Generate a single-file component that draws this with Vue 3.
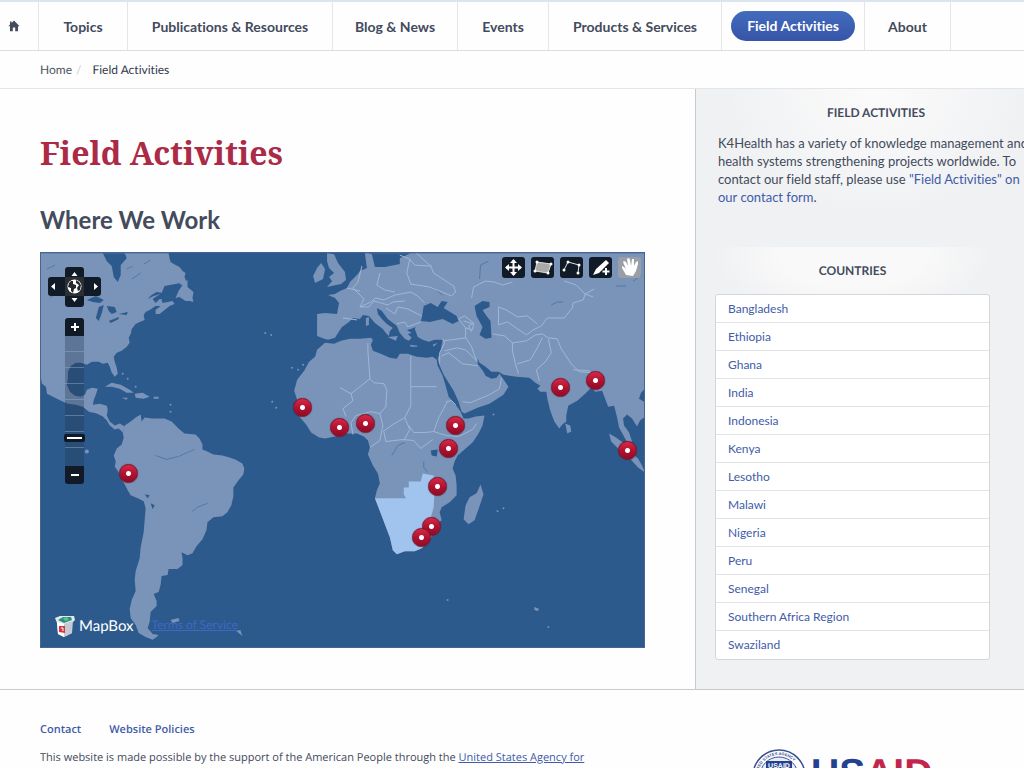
<script setup>
const links = ['Topics', 'Publications & Resources', 'Blog & News', 'Events', 'Products & Services', 'Field Activities', 'About']
const countries = ['Bangladesh', 'Ethiopia', 'Ghana', 'India', 'Indonesia', 'Kenya', 'Lesotho', 'Malawi', 'Nigeria', 'Peru', 'Senegal', 'Southern Africa Region', 'Swaziland']

const markers = [
  { name: 'Senegal', x: 262, y: 155 },
  { name: 'Ghana', x: 299, y: 175 },
  { name: 'Nigeria', x: 325, y: 171 },
  { name: 'Ethiopia', x: 415, y: 173 },
  { name: 'Kenya', x: 408, y: 196 },
  { name: 'Malawi', x: 397, y: 235 },
  { name: 'Swaziland', x: 391, y: 275 },
  { name: 'Lesotho', x: 381, y: 286 },
  { name: 'India', x: 521, y: 135 },
  { name: 'Bangladesh', x: 556, y: 128 },
  { name: 'Indonesia', x: 588, y: 199 },
  { name: 'Peru', x: 87, y: 222 }
]
const place = (m) => ({ left: (m.x / 605) * 100 + '%', top: (m.y / 395) * 100 + '%' })
</script>

<template>
  <div class="page">
    <nav class="nav" aria-label="Main">
      <a href="#" class="home" aria-label="Home">
        <svg width="12" height="12" viewBox="0 0 12 12"><path d="M6 .6 11.6 6.2H10V11.2H7.2V7.6H4.8V11.2H2V6.2H.4L2 4.6V1.5H3.6V3Z" fill="#434b5c" /></svg>
      </a>
      <a v-for="l in links" :key="l" href="#" :class="{ active: l === 'Field Activities' }"><span>{{ l }}</span></a>
    </nav>

    <div class="crumbs">
      <a href="#">Home</a><span class="slash">/</span><span class="here">Field Activities</span>
    </div>

    <div class="body">
      <main>
        <h1>Field Activities</h1>
        <h2>Where We Work</h2>
        <div class="map">
          <svg class="world" viewBox="40 252 605 395" aria-hidden="true">
            <rect x="40" y="252" width="605" height="395" fill="#2d5a8d" />
            <g fill="#7993b9">
              <path d="M40 252H168L169 257 170 261 175 264 179 266 182 270 185 272 184 276 186 281 182 284 178 283 174 287 170 289 166 290 162 292 156 291 151 294 147 298 153 295 159 293 163 293 165 295 161 299 162 302 167 301 172 300 174 303 169 305 164 309 159 313 155 313 155 309 160 305 155 305 149 309 145 311 143 314 144 319 139 321 135 323 131 328 130 333 128 337 129 342 126 346 121 350 116 352 113 356 114 361 116 367 117 373 114 376 111 372 109 366 107 362 102 363 98 361 91 361 86 364 80 362 75 362 70 365 67 371 67 377 66 384 69 391 74 395 80 396 84 394 86 389 91 387 97 388 95 394 93 399 92 404 99 403 106 405 107 409 106 415 109 421 114 425 119 423 124 426 122 432 118 428 114 429 109 425 106 420 102 416 96 413 88 411 82 406 75 404 67 403 60 400 52 396 46 393 45 386 41 383 40 378Z" />
              <path d="M178 290 184 281 187 279 187 286 193 291 192 297 193 301 189 300 185 300 179 296 175 297Z" />
              <path d="M122 432 124 425 130 421 135 417 140 414 141 421 144 417 151 418 164 418 171 421 175 425 179 429 184 433 195 434 199 438 202 444 202 449 207 451 213 454 222 455 229 457 235 459 242 463 244 468 243 474 238 480 233 487 233 496 231 505 227 512 222 516 213 517 207 522 206 530 202 539 196 546 192 553 187 555 181 552 182 558 182 565 177 569 168 569 167 575 161 576 160 585 158 592 153 594 156 601 156 606 150 612 149 622 147 628 152 634 158 635 156 637 152 640 145 637 138 633 135 625 130 618 129 609 131 600 135 591 134 580 135 571 139 558 140 547 143 532 144 520 145 508 143 501 137 498 130 495 127 490 122 480 118 472 114 466 115 461 113 455 116 448 121 444 123 437Z" />
              <path d="M325 342 334 343 341 340 350 338 360 338 371 337 373 339 371 344 373 350 381 353 390 357 397 358 400 353 408 353 417 356 427 357 433 356 437 359 438 365 443 375 446 385 449 396 456 404 461 411 464 418 469 418 476 416 485 415 483 425 479 433 473 442 466 448 458 455 455 461 453 468 456 475 457 485 457 495 450 502 442 507 440 512 442 520 435 525 433 533 429 542 422 548 415 551 405 551 397 554 393 550 390 537 385 524 380 510 375 498 377 490 380 483 378 473 373 465 368 454 370 447 368 440 364 436 357 433 347 433 335 436 325 438 319 437 311 432 306 424 300 417 296 408 297 399 294 390 297 379 304 370 309 361 315 356 317 349Z" />
              <path d="M365 252H645V417L641 420 638 426 633 418 628 414 624 418 625 425 630 432 633 441 629 443 626 438 620 427 618 417 615 405 609 406 606 398 603 390 596 391 592 387 586 393 578 400 569 405 567 415 567 421 563 424 560 428 555 421 551 410 548 398 547 391 541 391 538 388 541 385 536 382 530 377 517 376 504 374 499 371 492 371 486 366 480 362 478 358 478 363 484 371 486 375 492 378 497 377 500 373 505 380 509 386 504 394 490 403 478 407 465 413 462 411 459 401 454 390 449 382 444 374 440 365 438 358 441 350 443 339 435 339 429 341 423 339 418 336 415 328 416 326 411 328 407 329 412 332 408 333 412 337 409 340 405 338 400 332 397 325 388 318 382 310 377 307 378 313 382 318 387 323 393 327 390 330 389 335 386 332 383 328 375 322 369 315 363 314 360 318 353 317 349 321 342 326 338 332 335 337 328 339 324 338 317 335 317 329 317 313 325 312 337 313 339 302 335 297 328 294 335 293 340 290 347 287 350 281 357 274 360 270 367 267 366 260Z" />
              <path d="M327 252 334 253 338 262 345 271 346 279 341 283 327 286 332 280 329 276 334 272 329 267 327 260Z" />
              <path d="M321 262 325 268 323 278 315 282 313 275 317 267Z" />
              <path d="M481 484 484 494 479 509 475 520 469 524 464 519 466 505 470 497 477 493Z" />
              <path d="M610 433 617 437 625 443 633 453 639 458 643 465 646 472 639 467 630 457 621 450 612 441Z" />
              <path d="M566 423 571 425 572 431 568 433Z" />
              <path d="M104 386 111 382 120 384 129 389 133 392 126 392 119 388 111 386ZM134 393 142 392 149 396 143 398 135 397ZM121 397 127 397 126 399ZM153 396 158 396 158 398 153 398Z" />
              <path d="M388 336 398 335 396 340ZM366 317 369 316 369 324 366 325ZM410 344 418 345 417 346 411 346ZM433 344 438 342 434 346ZM170 620 178 618 179 621 172 623ZM236 631 242 636 240 630ZM535 607 540 609 538 611 535 610Z" />
            </g>
            <g fill="#2d5a8d">
              <path d="M102 252H124L126 257 120 264 120 274 117 281 113 276 111 265 106 260Z" />
              <path d="M368 252 372 253 375 266 385 266 400 263 400 257 411 252 405 252Z" />
              <path d="M422 317 424 305 431 302 438 306 442 300 448 301 444 307 457 315 459 320 453 323 443 318 430 321 421 320Z" />
              <path d="M475 305 483 300 490 301 490 306 483 309 487 315 491 320 492 337 486 338 480 334 483 326 477 315Z" />
              <path d="M86 299 95 295 103 299 99 302 92 301ZM95 317 98 306 103 304 101 312 98 320ZM106 305 114 306 116 311 111 313 108 310ZM108 320 118 316 118 318 110 322ZM118 313 127 311 126 314ZM431 450 438 449 437 456 432 455ZM144 494 149 495 147 498ZM150 503 154 505 152 509ZM642 392 645 389V401L640 398Z" />
              <path d="M164 285 180 282 177 286 166 299 159 298 155 302 152 298 161 292Z" />
            </g>
            <g class="lakes"><path d="M424 461 424 467 428 472M155 455 166 459 178 456 187 452 194 449M192 511 197 507 207 503M480 278 481 264 489 260M552 304 558 301 564 301M617 285 627 285M634 280 643 274M392 455 398 445 405 442M434 287 443 294M46 268 54 264M49 297 54 293M131 278 140 272M143 263 150 259M126 268 132 265" /></g>
            <path d="M375 498H406L404 494V487H409V481H421L423 473 434 475 435 489 434 507 430 521 433 532 430 540 422 548 415 551 405 551 397 554 393 550 390 537 385 524Z" fill="#a1c4ee" />
            <g class="borders">
              <path d="M368 342V350L370 378 374 382 384 383 387 389 386 406 380 413M370 378 351 393 340 387M351 393 353 400 343 408 346 416M411 355V386H437M411 386V405L405 417 410 429 404 440M405 417 393 424 383 431M448 400 444 408 439 417 434 431 425 432 414 432 409 425M353 434 351 422 356 415 371 411 380 413 383 425 380 440 370 447M384 431 386 441 403 439 414 440 421 448 433 439M434 431 447 435 459 436 473 429 477 423M456 404 452 400 447 401" />
              <path d="M443 338 445 342 440 352 440 363M445 350 457 347 466 349 475 358 478 361M466 337 472 346 474 352 477 360M442 355 449 352 463 363 478 365M463 401 471 402 490 394 500 388 502 377M444 340 466 337 466 327 459 318M464 320 474 323 473 329 466 327" />
              <path d="M400 254 410 258 407 272 411 283 430 286 452 295 456 291 454 285 434 272 431 265 422 257 417 252M410 258 415 264 432 265M362 265 358 281 353 287 364 298 360 306 371 301 376 297 384 299 395 294 406 292 411 291 418 295 425 302M380 272 377 284 385 289 395 291M347 287 360 290M360 306 369 306 374 300 388 304 393 301 405 300M386 307 395 313 398 306 408 308 422 315M343 317 357 319M397 323 405 321 408 326 421 321" />
              <path d="M459 318 465 315 474 322 469 325 472 331M472 297 474 286 480 283 486 280 495 281 503 284 513 281M499 324V306L507 309 518 316 528 315 538 323M493 333 505 335 513 342 513 350 516 363 519 373M513 342 527 340 536 334 543 333 549 337 558 338 562 348 572 363 580 371 592 372M518 363 531 359 538 347 543 337M549 338 552 352 546 361 537 369 540 380M574 369 590 370 592 379M499 324 508 321 527 334 534 329 542 325 548 317 565 317 573 307 574 302 584 299 586 293 595 288M565 280 577 284 586 293 594 296" />
            </g>
            <g fill="#7993b9"><circle cx="265" cy="332" r="1" /><circle cx="271" cy="334" r="1" /><circle cx="292" cy="367" r="1" /><circle cx="298" cy="369" r="1" /><circle cx="303" cy="364" r="1" /><circle cx="272" cy="401" r="1" /><circle cx="276" cy="407" r="1" /><circle cx="498" cy="511" r="1" /><circle cx="504" cy="508" r="1" /><circle cx="448" cy="600" r="1" /><circle cx="549" cy="627" r="1" /><circle cx="494" cy="414" r="1" /><circle cx="122" cy="373" r="1" /><circle cx="127" cy="378" r="1" /><circle cx="135" cy="386" r="1" /><circle cx="170" cy="404" r="1" /><circle cx="170" cy="411" r="1" /><circle cx="86" cy="451" r="2" /></g>
          </svg>

          <svg class="pan" width="53" height="40" viewBox="0 0 53 40" role="img" aria-label="Pan map">
            <rect y="10" width="53" height="19" rx="3" fill="#111b27" /><rect x="17" width="19" height="40" rx="3" fill="#111b27" />
            <path d="M17 10H36V29H17Z" fill="#2b2f34" />
            <path d="M26.5 5 29.5 9H23.5ZM26.5 35 29.5 31H23.5ZM3 19.5 7 16V23ZM50 19.5 46 16V23Z" fill="#fff" />
            <circle cx="26.500" cy="19.500" r="7" fill="#fff" />
            <path d="M21 16 23 14 25 14 25 17 28 18 28 21 26 22 25 26 23 24 23 21 20 20ZM28 13 31 15 33 18 32 23 30 24 29 21 31 18 28 16Z" fill="#25292e" />
          </svg>
          <div class="zoom">
            <button type="button" aria-label="Zoom in"><svg width="10" height="10" viewBox="0 0 10 10"><path d="M5 1V9M1 5H9" stroke="#fff" stroke-width="2" /></svg></button>
            <div class="track"><i v-for="n in 8" :key="n"></i><span class="handle"></span></div>
            <button type="button" aria-label="Zoom out"><svg width="10" height="10" viewBox="0 0 10 10"><path d="M1 5H9" stroke="#fff" stroke-width="2" /></svg></button>
          </div>

          <div class="tools">
            <button type="button" aria-label="Move"><svg viewBox="0 0 23 21"><path d="M4 10.500H19M11.500 3V18" stroke="#fff" stroke-width="2" /><path d="M11.500 2 15 6H8ZM11.500 19 15 15H8ZM3 10.500 7 7V14ZM20 10.500 16 7V14Z" fill="#fff" /></svg></button>
            <button type="button" aria-label="Draw polygon"><svg viewBox="0 0 23 21"><path d="M6 5 20 7 17 16 4 14Z" fill="#aaa" stroke="#ddd" /><g fill="#fff"><circle cx="6" cy="5" r="1.500" /><circle cx="20" cy="7" r="1.500" /><circle cx="17" cy="16" r="1.500" /><circle cx="4" cy="14" r="1.500" /></g></svg></button>
            <button type="button" aria-label="Draw line"><svg viewBox="0 0 23 21"><path d="M4 13 8 5 19 8 18 16" fill="none" stroke="#ddd" /><g fill="#fff"><circle cx="4" cy="13" r="1.500" /><circle cx="8" cy="5" r="1.500" /><circle cx="19" cy="8" r="1.500" /><circle cx="18" cy="16" r="1.500" /></g></svg></button>
            <button type="button" aria-label="Draw point"><svg viewBox="0 0 23 21"><path d="M17 3 20 6 10 16 4 18 7 12Z" fill="#fff" /><path d="M17 11V18M13.500 14.500H20.500" stroke="#fff" stroke-width="2" /></svg></button>
            <button type="button" class="on" aria-label="Navigate"><svg viewBox="0 0 23 21"><path d="M8 18 4 11 4 9 6 10 8 12 5 5 6 4 8 5 10 9 9 2 11 1 12 3 13 9 14 2 16 2 16 9 18 5 20 4 20 7 18 14 15 19Z" fill="#fff" /></svg></button>
          </div>

          <button v-for="m in markers" :key="m.name" type="button" class="pin" :style="place(m)" :aria-label="m.name"></button>

          <div class="credit">
            <svg width="20" height="21" viewBox="0 0 20 21" aria-hidden="true">
              <path d="M0 2 5 0 19 0 20 4 17 7 17 17 9 21 3 18 2 7Z" fill="#e4e8ec" /><path d="M2 6 9 8 9 21 3 18Z" fill="#fff" /><path d="M9 8 18 5 17 17 9 21Z" fill="#c3cbd5" />
              <path d="M3 4 8 1 16 1 17 4 9 7Z" fill="#268f87" /><path d="M8 2 12 1 14 4 10 5Z" fill="#65bd82" /><path d="M4 10 10 10 10 17 4 16Z" fill="#d23840" /><path d="M6 12H8V15" fill="none" stroke="#fff" />
            </svg>
            <b>MapBox</b>
            <a href="#">Terms of Service</a>
          </div>
        </div>
      </main>

      <aside>
        <section class="about">
          <h3>FIELD ACTIVITIES</h3>
          <p>K4Health has a variety of knowledge management and<br>health systems strengthening projects worldwide. To<br>contact our field staff, please use <a href="#">"Field Activities" on<br>our contact form</a>.</p>
        </section>
        <section class="countries">
          <h3>COUNTRIES</h3>
          <ul>
            <li v-for="c in countries" :key="c"><a href="#">{{ c }}</a></li>
          </ul>
        </section>
      </aside>
    </div>

    <footer>
      <div class="legal">
        <div class="flinks"><a href="#">Contact</a><a href="#">Website Policies</a></div>
        <p>This website is made possible by the support of the American People through the <a href="#">United States Agency for</a></p>
      </div>
      <svg class="usaid" width="182" height="54" viewBox="0 0 182 54" role="img" aria-label="USAID">
        <defs><path id="seal-arc" d="M6 27A21 21 0 0 1 48 27" /></defs>
        <circle cx="27" cy="27" r="26" fill="#fff" stroke="#3b4f96" stroke-width="1.500" />
        <circle cx="27" cy="27" r="19" fill="#e9ebf5" stroke="#3b4f96" />
        <text class="arc"><textPath href="#seal-arc" startOffset="0">UNITED STATES AGENCY</textPath></text>
        <path d="M14 12H40V30Q40 38 27 44 14 38 14 30Z" fill="#24418f" />
        <text x="27" y="19" class="mini">USAID</text>
        <text x="59" y="37" class="word">US<tspan class="red">AID</tspan></text>
      </svg>
    </footer>
  </div>
</template>

<style>
body { background: #fefefe; }
</style>

<style scoped>
* { box-sizing: border-box; }
.page { height: 100vh; overflow: hidden; border-top: 2px solid #dbe4ef; font-family: Lato, "Open Sans", sans-serif; font-size: 12px; font-variant-ligatures: none; color: #434b5c; }
a { color: #3f5ba9; text-decoration: none; }
h1, h2, h3, p, ul { margin: 0; padding: 0; }
button { border: 0; padding: 0; display: flex; align-items: center; justify-content: center; }

.nav { display: grid; grid-template-columns: 39px 89px 205px 125px 91px 173px 143px 86px; height: 49px; border-bottom: 1px solid #dcdddf; }
.nav a { display: flex; align-items: center; justify-content: center; border-right: 1px solid #e5e6e8; color: #434b5c; font-size: 14px; font-weight: 700; white-space: nowrap; }
.nav .home { padding-right: 10px; }
.nav .active span { color: #fff; background: linear-gradient(#436cbd, #3654a8); border-radius: 15px; padding: 0 16px; line-height: 30px; }

.crumbs { display: flex; align-items: center; height: 38px; padding-left: 40px; border-bottom: 1px solid #e4e5e7; text-rendering: geometricPrecision; }
.crumbs a { color: #4d5361; }
.slash { color: #cfd1d6; margin: 0 11px 0 4px; }
.here { color: #333a4c; }

.body { display: grid; grid-template-columns: minmax(0, 1fr) 329px; border-bottom: 1px solid #c9cacd; }
main { padding: 44px 50px 41px 40px; }
h1 { font-family: "Noto Serif", "Droid Serif", "DejaVu Serif Condensed", "DejaVu Serif", serif; font-size: 32px; line-height: 40px; font-weight: 700; color: #ab2a46; white-space: nowrap; }
h2 { font-size: 24px; line-height: 32px; margin: 31px 0 16px; font-weight: 700; }

.map { position: relative; aspect-ratio: 605 / 396; overflow: hidden; background: #2d5a8d; border: 1px solid #46658f; }
.world { display: block; width: 100%; height: 100%; }
.borders path { fill: none; stroke: #a0b7d5; stroke-width: 1; stroke-linejoin: round; }
.lakes path { fill: none; stroke: #5279a7; stroke-width: 1; }
.pan { position: absolute; left: 7px; top: 14px; }
.zoom { position: absolute; left: 24px; top: 65px; width: 19px; }
.zoom button { width: 19px; height: 18px; background: #111b27; border-radius: 3px 3px 0 0; }
.zoom button:last-child { border-radius: 0 0 3px 3px; }
.track { position: relative; background: rgba(30, 50, 70, 0.3); }
.track i { display: block; height: 16px; border-bottom: 1px solid rgba(150, 175, 205, 0.45); }
.track i:last-of-type { height: 18px; border: 0; }
.handle { position: absolute; left: -1px; right: -1px; top: 98px; height: 8px; border: 3px solid #101a26; border-radius: 2px; background: #fff; }
.tools { position: absolute; right: 3px; top: 4px; display: flex; gap: 6px; }
.tools button { width: 23px; height: 21px; border-radius: 3px; background: #111b27; }
.tools .on { background: #9a9fa7; }
.tools svg { width: 23px; height: 21px; }
.pin { position: absolute; width: 19px; height: 19px; margin: -10px 0 0 -9px; border-radius: 50%; border: 1px solid #80162c; background: radial-gradient(circle, #fff 0 2px, transparent 3px), linear-gradient(#d72845, #b01332 50%, #900b25); box-shadow: 0 0 1px #60182b; }
.credit { position: absolute; left: 14px; bottom: 10px; display: flex; align-items: center; color: #fff; text-rendering: geometricPrecision; }
.credit b { font-size: 15px; font-weight: 400; line-height: 22px; margin: 0 18px 0 4px; }
.credit a { color: #3d68c4; text-decoration: underline; line-height: 16px; padding-bottom: 2px; }

aside { border-left: 1px solid #c9cacd; overflow: hidden; background: radial-gradient(ellipse 150px 130px at 180px 0, #fbfbfb, transparent), #f0f1f3; padding: 15px 0 28px 19px; }
h3 { font-size: 12px; line-height: 18px; font-weight: 700; text-align: center; text-rendering: geometricPrecision; }
.about { width: 316px; margin-left: 3px; white-space: nowrap; }
.about p { font-size: 13px; line-height: 18px; margin-top: 12px; min-height: 72px; }
.countries { width: 275px; margin-top: 41px; padding-top: 15px; background: radial-gradient(ellipse 140px 60px at 50% 10px, #f9f9f9 50%, transparent); }
.countries ul { list-style: none; margin-top: 14px; background: #fff; border: 1px solid #d5d6d9; border-radius: 3px; }
li { height: 28px; line-height: 28px; padding-left: 12px; border-bottom: 1px solid #e2e3e5; }
li:last-child { border: 0; }

footer { display: flex; justify-content: space-between; padding: 31px 90px 0 40px; text-rendering: geometricPrecision; }
.legal { font-family: "Open Sans", Lato, sans-serif; font-size: 11px; }
.flinks { display: flex; gap: 28px; font-weight: 600; line-height: 18px; }
.legal p { margin-top: 10px; line-height: 18px; white-space: nowrap; }
.legal p a { text-decoration: underline; }
.usaid { margin-top: 28px; flex: none; }
.arc { font: 700 4px "Liberation Sans", sans-serif; fill: #3b4f96; }
.mini { font: 700 7px "Liberation Sans", sans-serif; fill: #fff; text-anchor: middle; }
.word { font: 700 39px "Liberation Sans", sans-serif; fill: #24418f; }
.red { fill: #c2274b; }
</style>
